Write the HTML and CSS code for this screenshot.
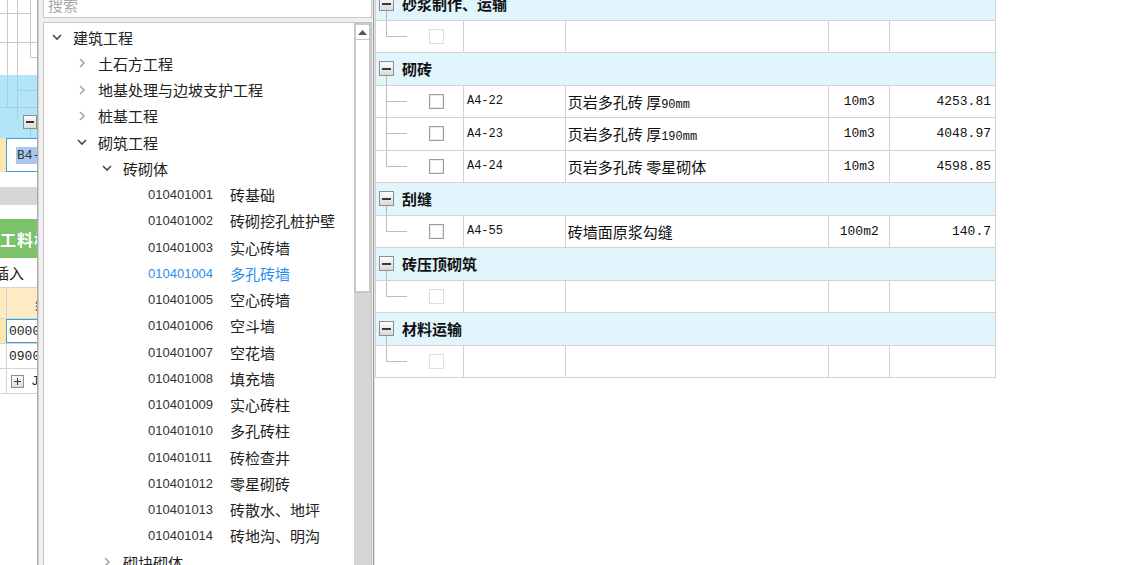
FILE: index.html
```html
<!DOCTYPE html>
<html lang="zh-CN">
<head>
    <meta charset="UTF-8">
    <title>清单项目选择</title>
    <link rel="stylesheet" href="styles.css">
</head>
<body>
<div class="screen">

    <!-- Hintergrund: Teil der Anwendung links -->
    <div class="app-strip">
        <div class="as-grid"></div>
        <div class="as-blue"><span class="mini-box minus"></span></div>
        <div class="as-sel">
            <div class="as-yellow"></div>
            <div class="as-sel-cell"><span class="as-hl">B4-</span></div>
        </div>
        <div class="as-gap1"></div>
        <div class="as-gray"></div>
        <div class="as-gap2"></div>
        <div class="as-green">工料机</div>
        <div class="as-insert">插入</div>
        <div class="as-head"><span>编</span></div>
        <div class="as-row">
            <div class="as-yellow"></div>
            <div class="as-input">0000</div>
        </div>
        <div class="as-row">
            <div class="as-blank"></div>
            <div class="as-cell">0900</div>
        </div>
        <div class="as-row last">
            <div class="as-blank"></div>
            <div class="as-cell"><span class="mini-box plus"></span><span class="as-j">J</span></div>
        </div>
    </div>

    <!-- Dropdown mit Suchfeld und Baum -->
    <div class="dropdown">
        <div class="search">搜索</div>
        <div class="tree-box">
            <div class="tree">
                <div class="node lv1"><span class="tog"><svg viewBox="0 0 10 10"><polyline class="open" points="1,3 5,7 9,3"/></svg></span><span class="label">建筑工程</span></div>
                <div class="node lv2"><span class="tog"><svg viewBox="0 0 10 10"><polyline class="shut" points="3,1 7,5 3,9"/></svg></span><span class="label">土石方工程</span></div>
                <div class="node lv2"><span class="tog"><svg viewBox="0 0 10 10"><polyline class="shut" points="3,1 7,5 3,9"/></svg></span><span class="label">地基处理与边坡支护工程</span></div>
                <div class="node lv2"><span class="tog"><svg viewBox="0 0 10 10"><polyline class="shut" points="3,1 7,5 3,9"/></svg></span><span class="label">桩基工程</span></div>
                <div class="node lv2"><span class="tog"><svg viewBox="0 0 10 10"><polyline class="open" points="1,3 5,7 9,3"/></svg></span><span class="label">砌筑工程</span></div>
                <div class="node lv3"><span class="tog"><svg viewBox="0 0 10 10"><polyline class="open" points="1,3 5,7 9,3"/></svg></span><span class="label">砖砌体</span></div>
                <div class="node lv4"><span class="tog"></span><span class="code">010401001</span><span class="label">砖基础</span></div>
                <div class="node lv4"><span class="tog"></span><span class="code">010401002</span><span class="label">砖砌挖孔桩护壁</span></div>
                <div class="node lv4"><span class="tog"></span><span class="code">010401003</span><span class="label">实心砖墙</span></div>
                <div class="node lv4 selected"><span class="tog"></span><span class="code">010401004</span><span class="label">多孔砖墙</span></div>
                <div class="node lv4"><span class="tog"></span><span class="code">010401005</span><span class="label">空心砖墙</span></div>
                <div class="node lv4"><span class="tog"></span><span class="code">010401006</span><span class="label">空斗墙</span></div>
                <div class="node lv4"><span class="tog"></span><span class="code">010401007</span><span class="label">空花墙</span></div>
                <div class="node lv4"><span class="tog"></span><span class="code">010401008</span><span class="label">填充墙</span></div>
                <div class="node lv4"><span class="tog"></span><span class="code">010401009</span><span class="label">实心砖柱</span></div>
                <div class="node lv4"><span class="tog"></span><span class="code">010401010</span><span class="label">多孔砖柱</span></div>
                <div class="node lv4"><span class="tog"></span><span class="code">010401011</span><span class="label">砖检查井</span></div>
                <div class="node lv4"><span class="tog"></span><span class="code">010401012</span><span class="label">零星砌砖</span></div>
                <div class="node lv4"><span class="tog"></span><span class="code">010401013</span><span class="label">砖散水、地坪</span></div>
                <div class="node lv4"><span class="tog"></span><span class="code">010401014</span><span class="label">砖地沟、明沟</span></div>
                <div class="node lv3"><span class="tog"><svg viewBox="0 0 10 10"><polyline class="shut" points="3,1 7,5 3,9"/></svg></span><span class="label">砌块砌体</span></div>
            </div>
            <div class="scrollbar">
                <div class="sb-up"><svg viewBox="0 0 9 5"><polygon points="0,5 4.5,0 9,5"/></svg></div>
                <div class="sb-thumb"></div>
            </div>
        </div>
    </div>

    <!-- Rechte Tabelle mit Quotenpositionen -->
    <div class="quota-panel">
        <div class="quota-table">
            <div class="grp"><span class="box minus"></span><span class="grp-title">砂浆制作、运输</span></div>
            <div class="row">
                <div class="c1 last"><span class="chk off"></span></div>
                <div class="c2"></div><div class="c3"></div><div class="c4"></div><div class="c5"></div>
            </div>

            <div class="grp"><span class="box minus"></span><span class="grp-title">砌砖</span></div>
            <div class="row">
                <div class="c1 mid"><span class="chk"></span></div>
                <div class="c2">A4-22</div>
                <div class="c3"><span>页岩多孔砖 厚<span class="mono">90mm</span></span></div>
                <div class="c4">10m3</div>
                <div class="c5">4253.81</div>
            </div>
            <div class="row">
                <div class="c1 mid"><span class="chk"></span></div>
                <div class="c2">A4-23</div>
                <div class="c3"><span>页岩多孔砖 厚<span class="mono">190mm</span></span></div>
                <div class="c4">10m3</div>
                <div class="c5">4048.97</div>
            </div>
            <div class="row">
                <div class="c1 last"><span class="chk"></span></div>
                <div class="c2">A4-24</div>
                <div class="c3">页岩多孔砖 零星砌体</div>
                <div class="c4">10m3</div>
                <div class="c5">4598.85</div>
            </div>

            <div class="grp"><span class="box minus"></span><span class="grp-title">刮缝</span></div>
            <div class="row">
                <div class="c1 last"><span class="chk"></span></div>
                <div class="c2">A4-55</div>
                <div class="c3">砖墙面原浆勾缝</div>
                <div class="c4">100m2</div>
                <div class="c5">140.7</div>
            </div>

            <div class="grp"><span class="box minus"></span><span class="grp-title">砖压顶砌筑</span></div>
            <div class="row">
                <div class="c1 last"><span class="chk off"></span></div>
                <div class="c2"></div><div class="c3"></div><div class="c4"></div><div class="c5"></div>
            </div>

            <div class="grp"><span class="box minus"></span><span class="grp-title">材料运输</span></div>
            <div class="row">
                <div class="c1 last"><span class="chk off"></span></div>
                <div class="c2"></div><div class="c3"></div><div class="c4"></div><div class="c5"></div>
            </div>
        </div>
    </div>

</div>
</body>
</html>
```

FILE: styles.css
```css
html, body {
    margin: 0;
    padding: 0;
    background-color: #fff;
}
body {
    font-family: "Noto Sans CJK SC", "Liberation Sans", sans-serif;
    color: #222;
}
.screen {
    display: flex;
    width: 1139px;
    height: 565px;
    overflow: hidden;
}

/* ---------- linker Hintergrundstreifen ---------- */
.app-strip {
    width: 37px;
    flex: none;
    display: flex;
    flex-direction: column;
    overflow: hidden;
    background-color: #fff;
}
.as-grid {
    height: 75px;
    flex: none;
    background:
        linear-gradient(#c9c9c9, #c9c9c9) 7px 0 / 1px 100% no-repeat,
        linear-gradient(#c9c9c9, #c9c9c9) 17px 0 / 1px 100% no-repeat,
        linear-gradient(#c9c9c9, #c9c9c9) 30px 0 / 1px 57px no-repeat,
        linear-gradient(#c9c9c9, #c9c9c9) 0 13px / 30px 1px no-repeat,
        linear-gradient(#c9c9c9, #c9c9c9) 0 42px / 37px 1px no-repeat,
        linear-gradient(#c9c9c9, #c9c9c9) 30px 57px / 7px 1px no-repeat,
        #fff;
}
.as-blue {
    height: 63px;
    flex: none;
    display: flex;
    align-items: flex-start;
    box-sizing: border-box;
    padding: 40px 0 0 23px;
    background:
        linear-gradient(#a9cfdf, #a9cfdf) 7px 0 / 1px 32px no-repeat,
        linear-gradient(#a9cfdf, #a9cfdf) 17px 0 / 1px 46px no-repeat,
        linear-gradient(#a9cfdf, #a9cfdf) 17px 15px / 20px 1px no-repeat,
        linear-gradient(#a9cfdf, #a9cfdf) 0 32px / 37px 1px no-repeat,
        linear-gradient(#a9cfdf, #a9cfdf) 30px 54px / 1px 9px no-repeat,
        #b3e5f8;
}
.mini-box {
    display: inline-flex;
    flex: none;
    align-items: center;
    justify-content: center;
    width: 14px;
    height: 14px;
    box-sizing: border-box;
    border: 1px solid #8e8e8e;
    background: linear-gradient(#fbfbfb, #dcdcdc);
}
.mini-box::before {
    content: "";
    width: 8px;
    height: 2px;
    background-color: #333;
}
.mini-box.plus {
    width: 13px;
    height: 13px;
    background:
        linear-gradient(#333, #333) center / 1px 7px no-repeat,
        linear-gradient(#fbfbfb, #dcdcdc);
}
.mini-box.plus::before {
    width: 7px;
    height: 1px;
}
.as-sel {
    height: 34px;
    flex: none;
    display: flex;
}
.as-yellow {
    width: 6px;
    flex: none;
    background-color: #fde7b0;
}
.as-sel-cell {
    flex: 1;
    display: flex;
    align-items: center;
    border: 1px solid #3d9fe0;
    border-right: none;
    padding-left: 9px;
    font-family: "Liberation Mono", monospace;
    font-size: 13px;
    color: #333;
}
.as-hl {
    background-color: #a9c8ef;
    padding: 1px 4px 1px 1px;
}
.as-gap1 {
    height: 15px;
    flex: none;
}
.as-gray {
    height: 18px;
    flex: none;
    background-color: #d6d6d6;
}
.as-gap2 {
    height: 14px;
    flex: none;
}
.as-green {
    height: 39px;
    flex: none;
    display: flex;
    align-items: center;
    background-color: #7cc26a;
    color: #fff;
    font-weight: bold;
    font-size: 16px;
    white-space: nowrap;
    letter-spacing: 1px;
}
.as-insert {
    height: 29px;
    flex: none;
    display: flex;
    align-items: center;
    margin-left: -6px;
    font-size: 15px;
    color: #222;
    white-space: nowrap;
}
.as-head {
    height: 31px;
    flex: none;
    display: flex;
    align-items: center;
    box-sizing: border-box;
    border-top: 1px solid #d4d4d4;
    padding-left: 35px;
    font-size: 15px;
    color: #555;
    white-space: nowrap;
    background:
        linear-gradient(#d4d4d4, #d4d4d4) 6px 0 / 1px 100% no-repeat,
        #fdebc3;
}
.as-row {
    height: 24px;
    flex: none;
    display: flex;
    border-top: 1px solid #d4d4d4;
}
.as-row.last {
    border-bottom: 1px solid #d4d4d4;
}
.as-blank {
    width: 6px;
    flex: none;
    border-right: 1px solid #d4d4d4;
}
.as-input {
    flex: 1;
    display: flex;
    align-items: center;
    border: 1px solid #3d9fe0;
    border-right: none;
    padding-left: 2px;
    font-family: "Liberation Mono", monospace;
    font-size: 13px;
    color: #222;
}
.as-cell {
    flex: 1;
    display: flex;
    align-items: center;
    padding-left: 2px;
    font-family: "Liberation Mono", monospace;
    font-size: 13px;
    color: #222;
    white-space: nowrap;
}
.as-cell .mini-box {
    margin-left: 2px;
}
.as-j {
    margin-left: 7px;
}

/* ---------- Dropdown ---------- */
.dropdown {
    width: 337px;
    flex: none;
    box-sizing: border-box;
    display: flex;
    flex-direction: column;
    border-left: 1px solid #aaa;
    border-right: 1px solid #9c9c9c;
    box-shadow: inset 1px 0 0 #cfcfcf;
    padding: 0 1px 0 5px;
    background-color: #f0f0f0;
}
.search {
    height: 24px;
    flex: none;
    margin-top: -6px;
    box-sizing: border-box;
    border: 1px solid #c9c9c9;
    background-color: #fff;
    padding-left: 4px;
    font-size: 15px;
    line-height: 20px;
    color: #a9a9a9;
}
.tree-box {
    flex: 1;
    display: flex;
    margin-top: 4px;
    border: 1px solid #c4c4c4;
    background-color: #fff;
}
.tree {
    flex: 1;
    padding-top: 1px;
}
.node {
    display: flex;
    align-items: center;
    height: 26.25px;
    white-space: nowrap;
    font-size: 15px;
    color: #222;
}
.node.lv1 { padding-left: 8px; }
.node.lv2 { padding-left: 33px; }
.node.lv3 { padding-left: 58px; }
.node.lv4 { padding-left: 83px; }
.tog {
    width: 21px;
    flex: none;
    display: flex;
    align-items: center;
}
.tog svg {
    width: 10px;
    height: 10px;
}
.tog polyline {
    fill: none;
    stroke-width: 1.6;
}
.tog .open {
    stroke: #4a4a4a;
}
.tog .shut {
    stroke: #a6a6a6;
}
.code {
    width: 82px;
    flex: none;
    font-family: "Liberation Sans", sans-serif;
    font-size: 13px;
    color: #333;
}
.node.selected .code,
.node.selected .label {
    color: #2b8ff0;
}

.scrollbar {
    width: 17px;
    flex: none;
    display: flex;
    flex-direction: column;
    background-color: #d5d5d5;
}
.sb-up {
    height: 17px;
    flex: none;
    box-sizing: border-box;
    display: flex;
    align-items: center;
    justify-content: center;
    border: 2px solid #c8c8c8;
    border-bottom-width: 1px;
    background-color: #fff;
}
.sb-up svg {
    width: 9px;
    height: 5px;
    fill: #4e5766;
}
.sb-thumb {
    height: 253px;
    flex: none;
    box-sizing: border-box;
    border: 2px solid #c8c8c8;
    border-top: none;
    background-color: #fff;
}

/* ---------- rechte Tabelle ---------- */
.quota-panel {
    flex: 1;
    border-left: 1px solid #e4e4e4;
    background-color: #fff;
}
.quota-table {
    width: 621px;
    margin-top: -12px;
    box-sizing: border-box;
    border-left: 1px solid #d2d2d2;
}
.grp {
    display: flex;
    align-items: center;
    height: 32.5px;
    box-sizing: border-box;
    border-bottom: 1px solid #d2d2d2;
    border-right: 1px solid #d2d2d2;
    padding-left: 3px;
    background:
        linear-gradient(#b9b9b9, #b9b9b9) 10px 100% / 1px 9px no-repeat,
        #e1f5fd;
}
.box {
    display: inline-flex;
    align-items: center;
    justify-content: center;
    width: 15px;
    height: 15px;
    flex: none;
    box-sizing: border-box;
    border: 1px solid #8f8f8f;
    background: linear-gradient(#fdfdfd, #d9d9d9);
}
.box.minus::before {
    content: "";
    width: 9px;
    height: 2px;
    background-color: #3a3a3a;
}
.grp-title {
    margin-left: 8px;
    font-size: 15px;
    font-weight: bold;
    color: #111;
}
.row {
    display: flex;
    height: 32.5px;
    box-sizing: border-box;
    border-bottom: 1px solid #d2d2d2;
}
.row > div {
    box-sizing: border-box;
    border-right: 1px solid #d2d2d2;
    display: flex;
    align-items: center;
    white-space: nowrap;
}
.c1 { width: 88px; padding-left: 53px; }
.c2 { width: 102px; padding-left: 3px; font-family: "Liberation Mono", monospace; font-size: 12px; color: #111; }
.c3 { width: 264px; padding-left: 2px; font-size: 15px; color: #111; }
.c4 { width: 61px; justify-content: center; font-family: "Liberation Mono", monospace; font-size: 13px; color: #111; }
.c5 { width: 106px; justify-content: flex-end; padding-right: 4px; font-family: "Liberation Mono", monospace; font-size: 13px; color: #111; }
.mono {
    font-family: "Liberation Mono", monospace;
    font-size: 12px;
}
.c1.mid {
    background:
        linear-gradient(#bdbdbd, #bdbdbd) 10px 0 / 1px 100% no-repeat,
        linear-gradient(#bdbdbd, #bdbdbd) 10px 50% / 21px 1px no-repeat;
}
.c1.last {
    background:
        linear-gradient(#bdbdbd, #bdbdbd) 10px 0 / 1px 50% no-repeat,
        linear-gradient(#bdbdbd, #bdbdbd) 10px 50% / 21px 1px no-repeat;
}
.chk {
    width: 15px;
    height: 15px;
    box-sizing: border-box;
    border: 1px solid #9d9d9d;
    box-shadow: inset 0 0 0 1px #ececec;
    background-color: #fff;
}
.chk.off {
    border-color: #dedede;
    box-shadow: none;
}
```
